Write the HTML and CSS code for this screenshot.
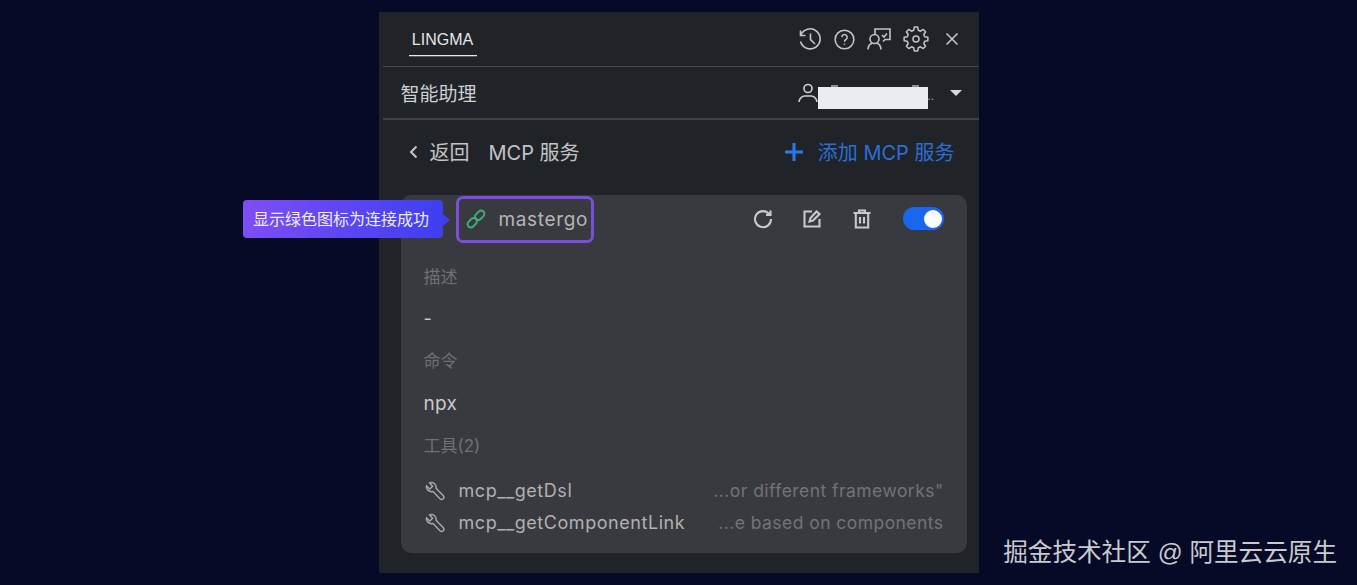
FILE: index.html
```html
<!DOCTYPE html>
<html lang="zh-CN">
<head>
<meta charset="utf-8">
<title>LINGMA MCP 服务</title>
<link rel="stylesheet" href="styles.css">
</head>
<body>
<main class="panel">
  <header class="topbar">
    <div class="tab">LINGMA</div>
    <div class="top-icons">
      <svg class="ic-history" viewBox="0 0 22 22"><path d="M1.500 2.500v5h5M1.800 7.300A10 10 0 1 1 1.500 13.500M11.500 5.500v6.200l4.500 4.300"/></svg>
      <svg class="ic-help" viewBox="0 0 22 22"><circle cx="11" cy="11" r="9.800"/><path d="M8.200 8.700a2.800 2.800 0 1 1 4.300 2.300c-1 .6-1.500 1.100-1.500 2.300M11 15.200v1.300"/></svg>
      <svg class="ic-present" viewBox="0 0 24 22"><path d="M8 6V1h15v10.500h-5l-2 2M15 7l2 2 3-3.500"/><circle cx="7.500" cy="11" r="4.500"/><path d="M1 21.500c.3-3.800 2.300-5.700 4-6.200M14 21.500c-.3-3.800-2.300-5.700-4-6.200"/></svg>
      <svg class="ic-gear" viewBox="0 0 26 26"><circle cx="13" cy="13" r="3"/><polygon points="21.690,10.670 24.880,11.330 24.880,14.670 21.690,15.330 20.790,17.500 22.590,20.220 20.220,22.590 17.500,20.790 15.330,21.690 14.670,24.880 11.330,24.880 10.670,21.690 8.500,20.790 5.780,22.590 3.410,20.220 5.210,17.500 4.310,15.330 1.120,14.670 1.120,11.330 4.310,10.670 5.210,8.500 3.410,5.780 5.780,3.410 8.500,5.210 10.670,4.310 11.330,1.120 14.670,1.120 15.330,4.310 17.500,5.210 20.220,3.410 22.590,5.780 20.790,8.500"/></svg>
      <svg class="ic-close" viewBox="0 0 14 14"><path d="M1.500 1.500l11 11M12.500 1.500l-11 11"/></svg>
    </div>
  </header>
  <section class="assistant">
    <span class="assistant-title">智能助理</span>
    <div class="account">
      <svg class="ic-user" viewBox="0 0 20 20"><circle cx="10" cy="5.500" r="4"/><path d="M1 19c.5-4 2.500-5.500 5.500-6h7c3 .5 5 2 5.500 6"/></svg>
      <span class="masked"></span>
      <span class="dots">..</span>
      <span class="caret"></span>
    </div>
  </section>
  <section class="nav">
    <div class="back">
      <svg class="ic-back" viewBox="0 0 9 14"><path d="M7.500 1.500L2 7l5.500 5.500"/></svg>
      <span>返回</span>
      <span class="nav-title">MCP 服务</span>
    </div>
    <div class="add">
      <svg class="ic-plus" viewBox="0 0 18 18"><path d="M9 0v18M0 9h18"/></svg>
      <span>添加 MCP 服务</span>
    </div>
  </section>
  <section class="card">
    <div class="card-head">
      <div class="name-box">
        <svg class="ic-link" viewBox="0 0 20 20"><rect x="8.500" y="3" width="10.500" height="6.500" rx="3.200" transform="rotate(-45 13.750 6.250)"/><rect x="1" y="10.500" width="10.500" height="6.500" rx="3.200" transform="rotate(-45 6.250 13.750)"/></svg>
        <span class="name">mastergo</span>
      </div>
      <div class="actions">
        <svg class="ic-act" viewBox="0 0 20 20"><path d="M16.500 5.500A8 8 0 1 0 18 10M17.500 1.500v4.500H13"/></svg>
        <svg class="ic-act" viewBox="0 0 20 20"><path d="M10 2.500H2.500v15h15V10M7.500 12.500l1-3.500 6-6.500 3 2.500-6.500 6.500z"/></svg>
        <svg class="ic-act" viewBox="0 0 20 20"><path d="M1.500 4h17M7 4V1.500h6V4M3.800 4v14.500h12.400V4M8 8v6.500M12 8v6.500"/></svg>
        <span class="toggle"><span class="knob"></span></span>
      </div>
    </div>
    <dl class="details">
      <dt>描述</dt>
      <dd>-</dd>
      <dt>命令</dt>
      <dd class="cmd">npx</dd>
      <dt>工具(2)</dt>
    </dl>
    <ul class="tools">
      <li class="tool">
        <svg class="ic-wrench" viewBox="0 0 20 20"><path d="M1.600 5l3.200 3 2.800-2.800-3-3.200C8 .6 11.600 3 11 7.200l7 7c1.200 1.200 1.200 2.600.2 3.500s-2.400.9-3.500-.2l-6.600-7C4.500 11.200.8 8.800 1.600 5z"/></svg>
        <span class="tool-name">mcp__getDsl</span>
        <span class="tool-desc">...or different frameworks"</span>
      </li>
      <li class="tool">
        <svg class="ic-wrench" viewBox="0 0 20 20"><path d="M1.600 5l3.200 3 2.800-2.800-3-3.200C8 .6 11.600 3 11 7.200l7 7c1.200 1.200 1.200 2.600.2 3.500s-2.400.9-3.500-.2l-6.600-7C4.500 11.200.8 8.800 1.600 5z"/></svg>
        <span class="tool-name">mcp__getComponentLink</span>
        <span class="tool-desc">...e based on components</span>
      </li>
    </ul>
  </section>
</main>
<div class="callout">显示绿色图标为连接成功</div>
<div class="watermark">掘金技术社区 @ 阿里云云原生</div>
</body>
</html>
```
FILE: styles.css
```css
* { box-sizing: border-box; }
html, body { height: 100%; }
body {
  margin: 0;
  padding-top: 12px;
  background: #070a26;
  font-family: "Inter", "Noto Sans CJK SC", sans-serif;
  overflow: hidden;
  position: relative;
}
svg { fill: none; stroke: currentColor; stroke-width: 1.600; display: block; flex: none; }
.panel {
  width: 600px;
  height: 561px;
  margin: 0 auto;
  padding: 0 12px 20px 4px;
  background: #202328;
  color: #c9cacc;
  display: flex;
  flex-direction: column;
}
.topbar {
  margin-right: -12px;
  height: 55px;
  padding: 0 20px 0 26px;
  border-bottom: 1px solid #45484c;
  display: flex;
  justify-content: space-between;
  align-items: center;
}
.tab {
  width: 68px;
  height: 32px;
  padding-top: 7px;
  margin-top: 2px;
  border-bottom: 1px solid #e8e8e8;
  box-shadow: 0 1px 0 #55585c;
  color: #e6e6e6;
  font-size: 16px;
  line-height: 18px;
  text-align: center;
  font-family: "Liberation Sans", sans-serif;
}
.top-icons { display: flex; align-items: center; color: #c4c5c6; margin-top: 1px; }
.ic-history { width: 22px; height: 22px; margin-right: 13px; }
.ic-help { width: 21px; height: 21px; margin-right: 12px; }
.ic-present { width: 24px; height: 22px; margin-right: 12px; }
.ic-gear { width: 26px; height: 26px; stroke-width: 1.500; stroke-linejoin: round; margin-right: 16px; }
.ic-close { width: 14px; height: 14px; }
.assistant {
  margin-right: -12px;
  height: 54px;
  padding: 0 17px 0 18px;
  border-bottom: 2px solid #3f4348;
  display: flex;
  justify-content: space-between;
  align-items: center;
}
.assistant-title { font-size: 19px; color: #cfd0d1; }
.account { display: flex; align-items: center; }
.ic-user { width: 20px; height: 20px; color: #cfd0d1; }
.masked {
  position: relative;
  width: 110px;
  height: 22px;
  background: #e9ebee;
  margin-top: 11px;
}
.masked::before,
.masked::after {
  content: "";
  position: absolute;
  top: -2px;
  height: 2px;
  background: #8d8e90;
}
.masked::before { left: 13px; width: 7px; }
.masked::after { left: 94px; width: 7px; }
.dots { width: 22px; color: #a8a9aa; font-size: 11px; line-height: 11px; margin-top: 8px; }
.caret {
  width: 0; height: 0;
  border-left: 6.500px solid transparent;
  border-right: 6.500px solid transparent;
  border-top: 6px solid #d8d8d8;
}
.nav {
  height: 65px;
  margin-right: -12px;
  padding: 0 24px 3px 26px;
  display: flex;
  justify-content: space-between;
  align-items: center;
}
.back { display: flex; align-items: center; font-size: 20px; color: #c3c4c5; }
.ic-back { width: 9px; height: 14px; margin-right: 12px; stroke-width: 2; margin-top: 2px; }
.nav-title { margin-left: 19px; }
.add { display: flex; align-items: center; gap: 15px; font-size: 20px; color: #2a6fd6; }
.ic-plus { width: 18px; height: 18px; stroke-width: 3; color: #2a7aec; margin-top: 2px; }
.card {
  margin: 10px 0 0 18px;
  height: 358px;
  background: #393a40;
  border-radius: 10px;
  padding: 0 23px;
  flex: none;
}
.card-head {
  height: 48px;
  display: flex;
  justify-content: space-between;
  align-items: center;
}
.name-box {
  margin-left: 32px;
  margin-top: 2px;
  width: 138px;
  height: 47px;
  border: 3px solid #7a4fe0;
  border-radius: 7px;
  padding: 0 0 0 7px;
  display: flex;
  align-items: center;
  gap: 13px;
}
.ic-link { width: 20px; height: 20px; color: #3fae7e; stroke-width: 1.900; margin-bottom: 2px; }
.name { font-size: 19px; color: #b4b5b7; letter-spacing: .65px; }
.actions { display: flex; align-items: center; color: #c8c9ca; }
.ic-act { width: 20px; height: 20px; margin-right: 30px; stroke-width: 2.100; }
.ic-act:first-child { margin-left: 1px; margin-right: 29px; }
.ic-act:nth-child(3) { margin-right: 31px; }
.toggle {
  width: 41px; height: 23px;
  border-radius: 12px;
  background: #1967ee;
  display: flex;
  justify-content: flex-end;
  align-items: center;
  padding-right: 2px;
}
.knob { width: 18px; height: 18px; border-radius: 50%; background: #fff; }
.details { margin: 21px 0 0; font-size: 17px; }
dt { height: 26px; line-height: 26px; color: #6f7074; margin-bottom: 16px; }
dd { height: 26px; line-height: 26px; margin: 0 0 16px; color: #c9cacc; font-size: 18px; }
dd.cmd { font-size: 19px; letter-spacing: .3px; height: 27px; line-height: 28px; }
.tools { list-style: none; margin: 10px 0 0; padding: 0; }
.tool {
  height: 32px;
  display: flex;
  align-items: center;
  font-size: 18px;
}
.ic-wrench { width: 20px; height: 20px; color: #a6a7a9; margin: 0 14px 0 1px; stroke-width: 1.500; }
.tool-name { color: #b0b1b3; letter-spacing: .55px; }
.tool-desc { margin-left: auto; color: #727377; font-size: 17.500px; letter-spacing: .45px; }
.callout {
  position: absolute;
  left: 243px;
  top: 200px;
  width: 200px;
  height: 38px;
  border-radius: 4px;
  background: linear-gradient(90deg, #7f4df5, #3e3ff0);
  color: #eee;
  font-size: 16px;
  line-height: 39px;
  padding-left: 10px;
  white-space: nowrap;
}
.callout::after {
  content: "";
  position: absolute;
  left: 100%;
  top: 14px;
  border-left: 7px solid #3e3ff0;
  border-top: 6px solid transparent;
  border-bottom: 6px solid transparent;
}
.watermark {
  position: absolute;
  right: 20px;
  top: 535px;
  font-size: 24.600px;
  line-height: 36px;
  color: #c9cbd0;
  font-family: "Liberation Sans", "Noto Sans CJK SC", sans-serif;
  white-space: nowrap;
}
```
